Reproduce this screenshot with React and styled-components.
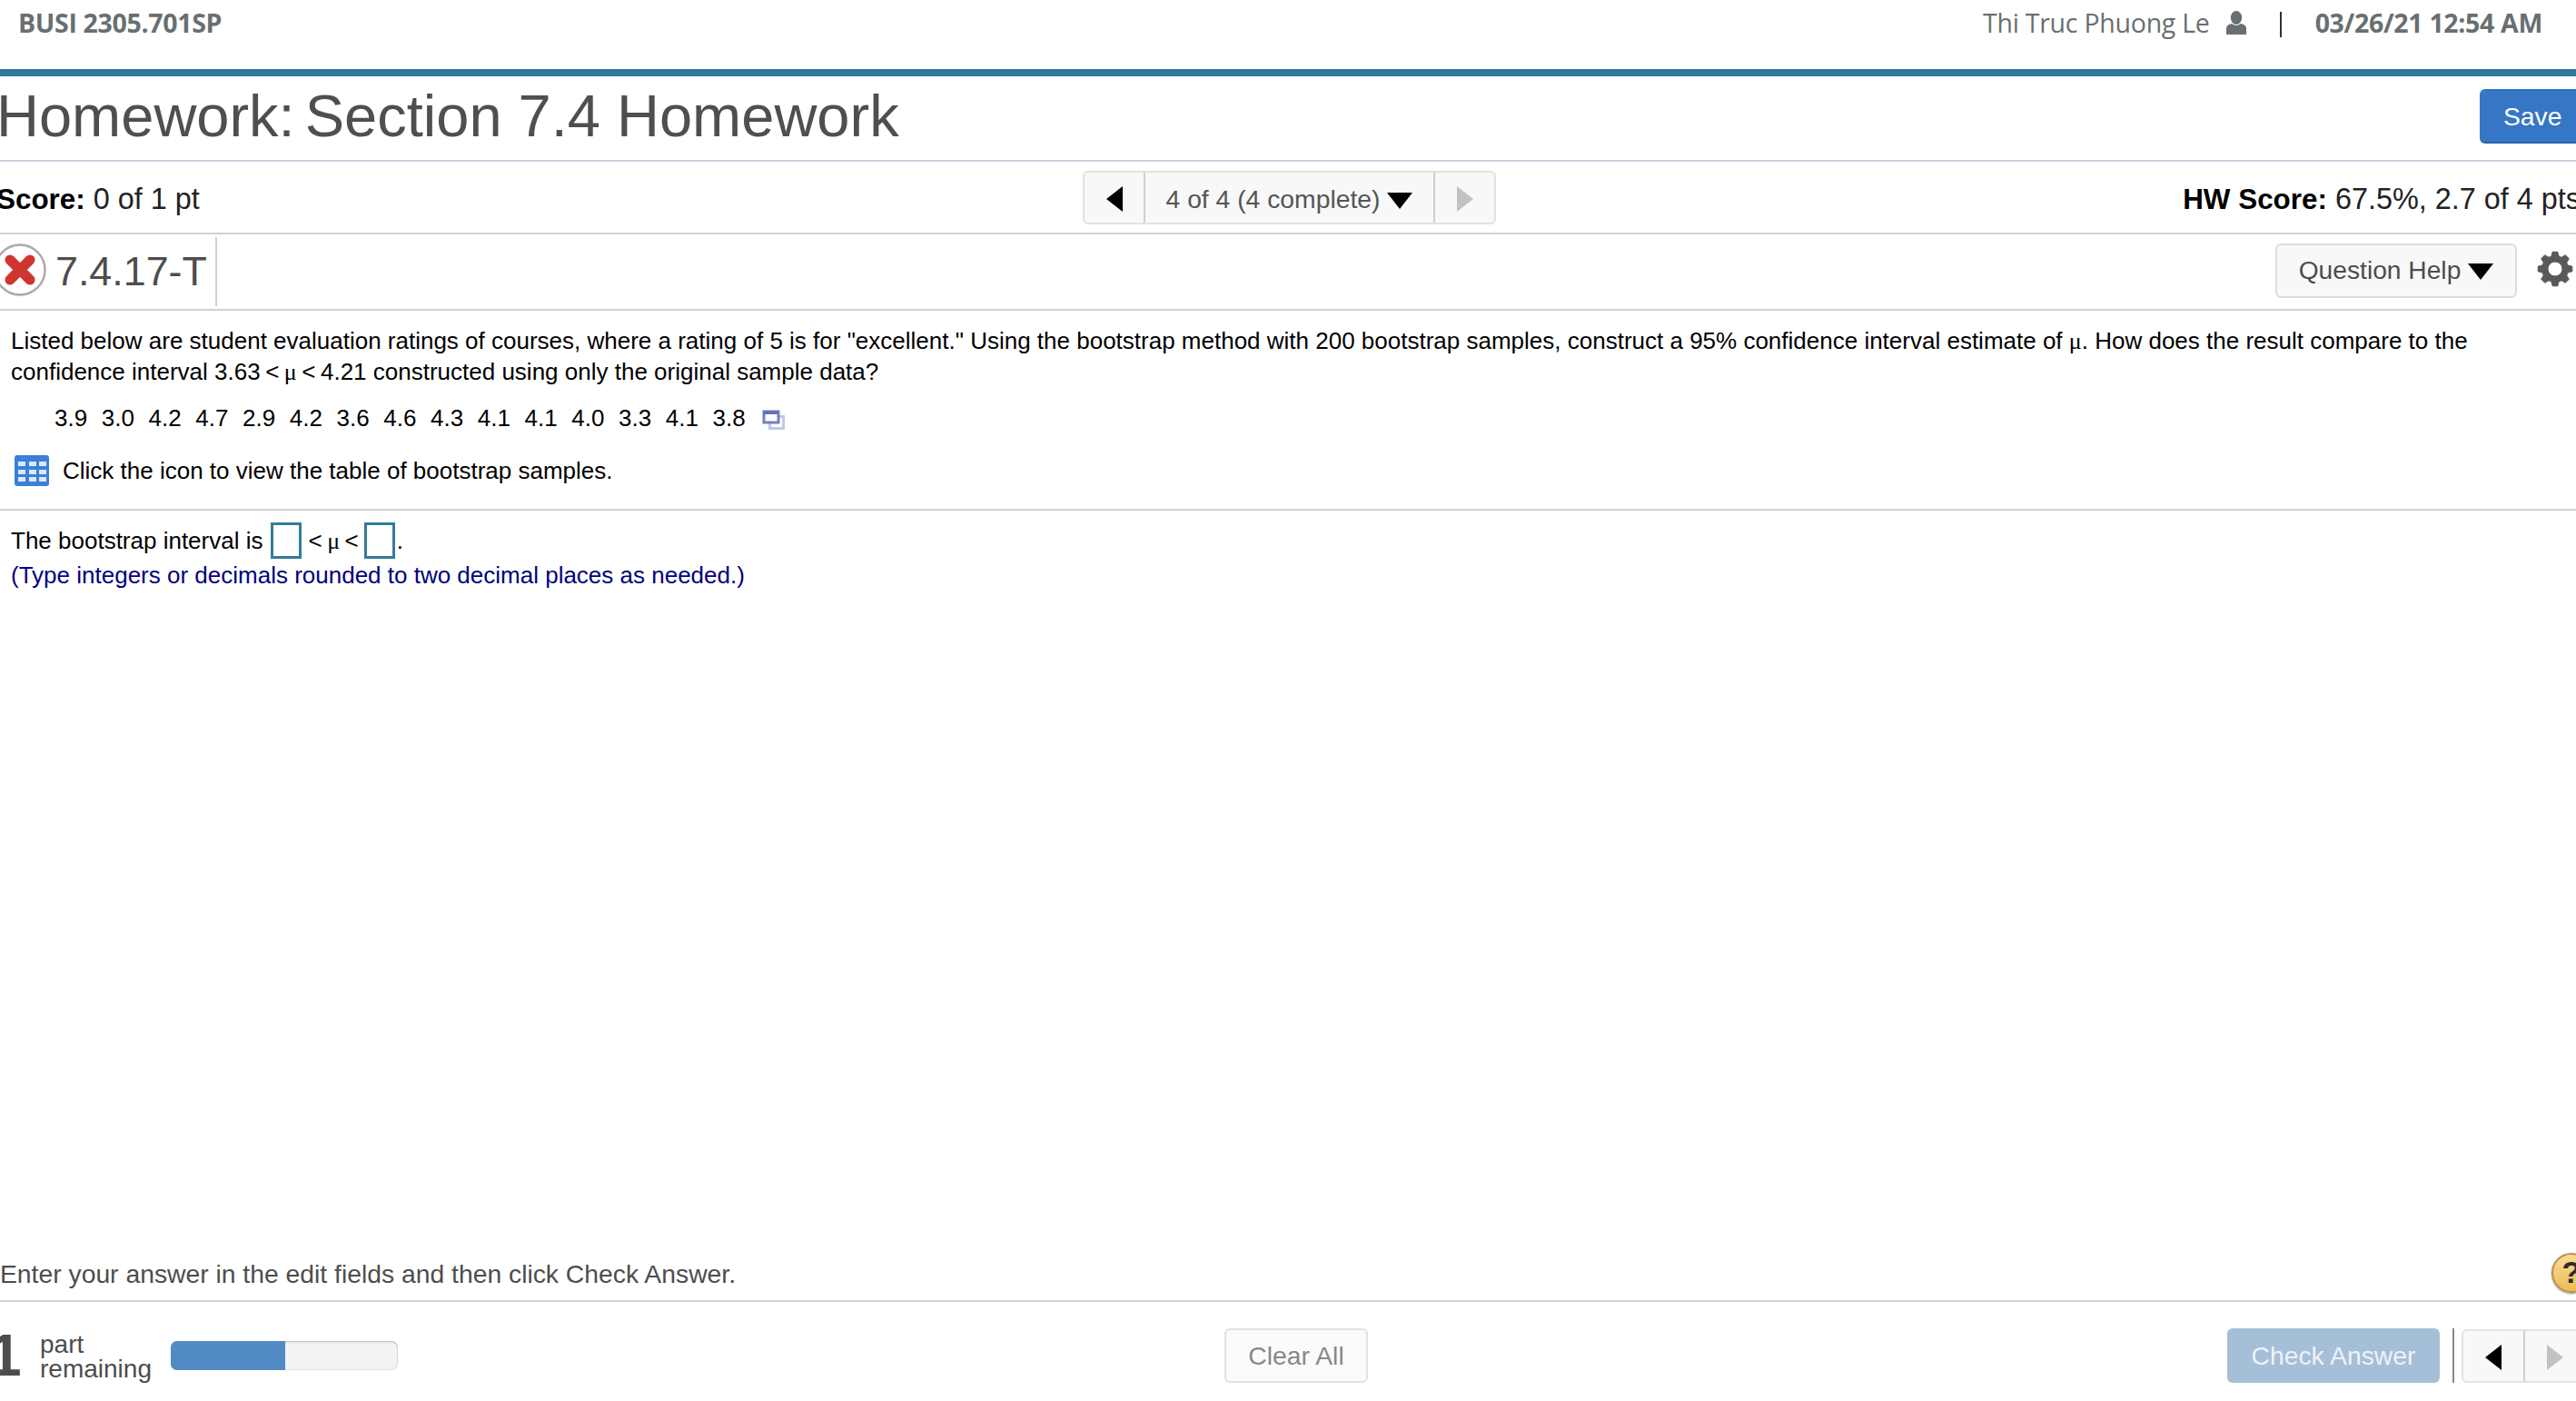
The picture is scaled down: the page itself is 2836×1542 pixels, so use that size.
import React from "react";
import styled, { createGlobalStyle } from "styled-components";

const Global = createGlobalStyle`
  html, body { margin: 0; padding: 0; background: #fff; }
  body { font-family: "Liberation Sans", Arial, sans-serif; }
`;

const Page = styled.div`
  width: 2836px; height: 1542px; overflow: hidden;
  display: flex; flex-direction: column; background: #fff;
`;
const TopBar = styled.header`
  height: 76px; flex: none; box-sizing: border-box;
  display: flex; align-items: flex-start; justify-content: space-between;
  padding: 6px 37px 0 20px;
  font-family: "Open Sans", sans-serif; font-size: 28.5px; line-height: 38px; color: #686f70; letter-spacing: -0.33px;
`;
const Course = styled.div` font-weight: 700; `;
const UserArea = styled.div` display: flex; align-items: center; `;
const UserName = styled.span` letter-spacing: -0.25px; `;
const UserIcon = styled.svg` width: 24px; height: 26px; margin-left: 17px; fill: #686f70; `;
const Pipe = styled.span` width: 2px; height: 28px; background: #333; margin: 4px 37px 0 36px; `;
const Stamp = styled.span` font-weight: 700; `;
const Accent = styled.div` height: 8px; flex: none; background: #337798; `;

const TitleRow = styled.div`
  height: 92px; flex: none; display: flex; align-items: center; justify-content: space-between;
  border-bottom: 2px solid #cdd0de;
`;
const Title = styled.h1`
  margin: 0 0 4px -4px; font-size: 65px; font-weight: 400; color: #4f4f4f; line-height: 76px;
`;
const TitleLead = styled.span` margin-right: -7px; `;
const SaveButton = styled.button`
  width: 116px; height: 60px; margin: 0 -10px 4px 0; flex: none; box-sizing: border-box;
  border: 0; border-bottom: 2px solid #2a62aa; border-radius: 6px 0 0 6px; background: #3576c5; color: #fff;
  font: 400 28.3px "Liberation Sans", sans-serif; text-align: left; padding: 2px 0 0 26px;
`;

const ScoreRow = styled.div`
  height: 78px; flex: none; display: grid; grid-template-columns: 1fr auto 1fr; align-items: center;
  border-bottom: 2px solid #cdd0de; font-size: 32.4px; color: #222;
`;
const ScoreLeft = styled.div` margin: 4px 0 0 -4px; white-space: nowrap; `;
const ScoreRight = styled.div` justify-self: end; white-space: nowrap; margin: 4px -5px 0 0; `;
const Strong = styled.b` color: #000; font-size: 31.4px; `;

const NavGroup = styled.div`
  display: flex; height: 59px; box-sizing: border-box; margin-left: ${p => p.$left || 0};
  border: 2px solid #e2e2e2; border-radius: 6px; background: #f8f8f8;
`;
const NavCell = styled.div`
  flex: none; width: ${p => p.$w}; display: flex; align-items: center; justify-content: center; gap: 8px;
  box-sizing: border-box; padding-top: 4px; color: #555; font-size: 28.3px;
  border-right: ${p => p.$div ? "2px solid #cfcfcf" : "0"};
`;
const Tri = styled.span`
  display: inline-block; width: 0; height: 0; flex: none;
  ${p => p.$dir === "down" && `border-left: 14px solid transparent; border-right: 14px solid transparent; border-top: 18px solid #000; margin-top: 3px;`}
  ${p => p.$dir === "left" && `border-top: 14px solid transparent; border-bottom: 14px solid transparent; border-right: 18px solid #000;`}
  ${p => p.$dir === "right" && `border-top: 14px solid transparent; border-bottom: 14px solid transparent; border-left: 18px solid #c2c2c2;`}
`;

const QuestionRow = styled.div`
  height: 82px; flex: none; display: flex; align-items: center; justify-content: space-between;
  border-bottom: 2px solid #cdd0de;
`;
const QuestionId = styled.div`
  height: 76px; width: 244px; box-sizing: border-box; display: flex; align-items: center;
  border-right: 2px solid #cdd0de; margin-left: -5px;
`;
const StatusIcon = styled.svg` width: 56px; height: 60px; flex: none; overflow: visible; `;
const QuestionCode = styled.span` font-size: 44.8px; color: #4d4d4d; margin: 0 0 2px 10px; white-space: nowrap; `;
const QuestionTools = styled.div` display: flex; align-items: center; margin: 0 2px 3px 0; `;
const HelpButton = styled.button`
  width: 266px; height: 60px; box-sizing: border-box; display: flex; align-items: center; justify-content: center; gap: 8px;
  border: 2px solid #dcdcdc; border-radius: 6px; background: #f8f8f8; color: #4d4d4d;
  font: 400 28.2px "Liberation Sans", sans-serif; padding: 0 0 1px;
`;
const Gear = styled.svg` width: 40px; height: 40px; margin: -4px 1px 0 22px; fill: #595959; stroke: #595959; stroke-width: 1; stroke-linejoin: round; `;

const Body = styled.main`
  flex: 1; min-height: 0; display: flex; flex-direction: column; padding-left: 12px; color: #000; font-size: 26px;
`;
const Prompt = styled.p` margin: 16px 0 0; line-height: 34px; width: 2780px; `;
const Mu = styled.span` font-family: "Liberation Serif", serif; line-height: 1; `;
const Op = styled.span` margin: 0 5.5px; `;
const Numbers = styled.div` display: flex; align-items: center; gap: 15.6px; margin: 17px 0 0 48px; line-height: 34px; `;
const PopIcon = styled.svg` width: 26px; height: 22px; margin: 4px 0 0 3px; `;
const TableLine = styled.div` display: flex; align-items: center; margin: 24px 0 0 4px; line-height: 34px; `;
const TableIcon = styled.svg` width: 38px; height: 34px; flex: none; margin-right: 15px; `;
const PartDivider = styled.div` height: 2px; background: #cdd0de; margin: 25px 0 0 -12px; `;
const AnswerLine = styled.div` display: flex; align-items: center; margin-top: 12px; height: 42px; white-space: pre; `;
const Blank = styled.span`
  width: 34px; height: 40px; box-sizing: border-box; border: 3px solid #357c9c; margin: 0 ${p => p.$r}px 0 ${p => p.$l}px; flex: none;
`;
const Hint = styled.div` color: #000080; line-height: 34px; `;

const Instructions = styled.div`
  height: 54px; padding-bottom: 2px; flex: none; display: flex; align-items: center; justify-content: space-between;
  border-bottom: 2px solid #cdd0de; font-size: 28.3px; color: #4d4d4d;
`;
const QuestionBadge = styled.span`
  width: 44px; height: 44px; flex: none; margin: 0 -17px 3px 0; border-radius: 50%; box-sizing: border-box;
  display: flex; align-items: center; justify-content: center; color: #2b2b2b; font: 700 34px "Liberation Sans", sans-serif;
  background: linear-gradient(#f8dd95, #edbb58); border: 2px solid #b9924a; box-shadow: 0 1px 2px #888;
`;

const Footer = styled.footer`
  height: 109px; flex: none; box-sizing: border-box; display: flex; align-items: center; padding-top: 9px;
`;
const FooterLeft = styled.div` display: flex; align-items: center; width: 1348px; flex: none; `;
const PartCount = styled.span` font-size: 64px; font-weight: 700; color: #4d4d4d; margin-left: -12px; width: 56px; flex: none; line-height: 64px; `;
const PartLabel = styled.span` font-size: 28px; line-height: 27px; color: #4d4d4d; width: 144px; flex: none; margin-top: 2px; `;
const Progress = styled.div`
  width: 250px; height: 32px; flex: none; border-radius: 7px; overflow: hidden; background: #f3f3f3;
  box-shadow: inset 0 1px 2px #bbb, inset 0 0 0 1px #e4e4e4;
`;
const ProgressFill = styled.div` height: 100%; background: #528ac5; `;
const ClearButton = styled.button`
  width: 158px; height: 60px; box-sizing: border-box; border: 2px solid #e2e2e2; border-radius: 6px; background: #fbfbfb; color: #888;
  font: 400 28.3px "Liberation Sans", sans-serif; padding: 0;
`;
const FooterRight = styled.div` display: flex; align-items: center; margin: 0 -12px 0 auto; `;
const CheckButton = styled.button`
  width: 234px; height: 60px; border: 0; border-radius: 6px; background: #a5bfd8; color: #eef3f8; padding: 0;
  font: 400 28.3px "Liberation Sans", sans-serif;
`;
const Separator = styled.span` width: 2px; height: 60px; background: #888; margin: 0 8px 0 14px; flex: none; `;

function gearPath(teeth, outer, root, hole) {
  const step = (Math.PI * 2) / teeth;
  const pts = [];
  for (let i = 0; i < teeth; i++) {
    const a = i * step - Math.PI / 2;
    [[root, -0.36], [outer, -0.19], [outer, 0.19], [root, 0.36]].forEach(([r, k]) => {
      pts.push(`${(r * Math.cos(a + k * step)).toFixed(2)} ${(r * Math.sin(a + k * step)).toFixed(2)}`);
    });
  }
  return `M${pts.join("L")}Z M${hole} 0A${hole} ${hole} 0 1 0 ${-hole} 0A${hole} ${hole} 0 1 0 ${hole} 0Z`;
}

export default function App() {
  const values = ["3.9","3.0","4.2","4.7","2.9","4.2","3.6","4.6","4.3","4.1","4.1","4.0","3.3","4.1","3.8"];
  return (
    <Page>
      <Global />
      <TopBar>
        <Course>BUSI 2305.701SP</Course>
        <UserArea>
          <UserName>Thi Truc Phuong Le</UserName>
          <UserIcon viewBox="0 0 24 26">
            <ellipse cx="12" cy="7.5" rx="6.2" ry="7.5" />
            <path d="M1 26 V19.5 Q1 15 7 14 Q12 18 17 14 Q23 15 23 19.5 V26 Z" />
          </UserIcon>
          <Pipe />
          <Stamp>03/26/21 12:54 AM</Stamp>
        </UserArea>
      </TopBar>
      <Accent />
      <TitleRow>
        <Title><TitleLead>Homework:</TitleLead> Section 7.4 Homework</Title>
        <SaveButton>Save</SaveButton>
      </TitleRow>
      <ScoreRow>
        <ScoreLeft><Strong>Score:</Strong> 0 of 1 pt</ScoreLeft>
        <NavGroup $left="3px">
          <NavCell $w="67px" $div><Tri $dir="left" /></NavCell>
          <NavCell $w="319px" $div>4 of 4 (4 complete)<Tri $dir="down" /></NavCell>
          <NavCell $w="65px"><Tri $dir="right" /></NavCell>
        </NavGroup>
        <ScoreRight><Strong>HW Score:</Strong> 67.5%, 2.7 of 4 pts</ScoreRight>
      </ScoreRow>
      <QuestionRow>
        <QuestionId>
          <StatusIcon viewBox="0 0 56 60">
            <circle cx="27" cy="28" r="27.5" fill="#fff" stroke="#aaa" strokeWidth="2.5" />
            <path d="M16 17 L38 39 M38 17 L16 39" stroke="#cf3630" strokeWidth="11" strokeLinecap="round" />
          </StatusIcon>
          <QuestionCode>7.4.17-T</QuestionCode>
        </QuestionId>
        <QuestionTools>
          <HelpButton>Question Help<Tri $dir="down" /></HelpButton>
          <Gear viewBox="-20 -20 40 40">
            <path fillRule="evenodd" d={gearPath(8, 19, 14.5, 8)} />
          </Gear>
        </QuestionTools>
      </QuestionRow>
      <Body>
        <Prompt>
          Listed below are student evaluation ratings of courses, where a rating of 5 is for "excellent." Using the bootstrap method with 200 bootstrap samples, construct a 95% confidence interval estimate of <Mu>μ</Mu>. How does the result compare to the confidence interval 3.63<Op>&lt;</Op><Mu>μ</Mu><Op>&lt;</Op>4.21 constructed using only the original sample data?
        </Prompt>
        <Numbers>
          {values.map((v, i) => <span key={i}>{v}</span>)}
          <PopIcon viewBox="0 0 26 22">
            <rect x="8.5" y="7.5" width="15" height="13" fill="#fff" stroke="#c3c8e4" strokeWidth="3" />
            <rect x="2" y="2" width="16" height="12" fill="#fff" stroke="#7480c0" strokeWidth="3" />
            <rect x="2" y="1" width="16" height="4" fill="#6470b8" />
          </PopIcon>
        </Numbers>
        <TableLine>
          <TableIcon viewBox="0 0 38 34">
            <rect x="0" y="0" width="38" height="34" rx="3" fill="#3c7fd6" />
            {[7, 16, 24].map(y => [4, 16, 27].map(x => (
              <rect key={`${x}-${y}`} x={x} y={y} width="8" height="5" fill="#dbe8f9" />
            )))}
          </TableIcon>
          Click the icon to view the table of bootstrap samples.
        </TableLine>
        <PartDivider />
        <AnswerLine>
          The bootstrap interval is<Blank $l={9} $r={7} /><span>&lt;</span><Op><Mu>μ</Mu></Op><span>&lt;</span><Blank $l={6} $r={2} />.
        </AnswerLine>
        <Hint>(Type integers or decimals rounded to two decimal places as needed.)</Hint>
      </Body>
      <Instructions>
        <span>Enter your answer in the edit fields and then click Check Answer.</span>
        <QuestionBadge>?</QuestionBadge>
      </Instructions>
      <Footer>
        <FooterLeft>
          <PartCount>1</PartCount>
          <PartLabel>part<br />remaining</PartLabel>
          <Progress><ProgressFill style={{ width: "50.5%" }} /></Progress>
        </FooterLeft>
        <ClearButton>Clear All</ClearButton>
        <FooterRight>
          <CheckButton>Check Answer</CheckButton>
          <Separator />
          <NavGroup>
            <NavCell $w="68px" $div><Tri $dir="left" /></NavCell>
            <NavCell $w="66px"><Tri $dir="right" /></NavCell>
          </NavGroup>
        </FooterRight>
      </Footer>
    </Page>
  );
}
